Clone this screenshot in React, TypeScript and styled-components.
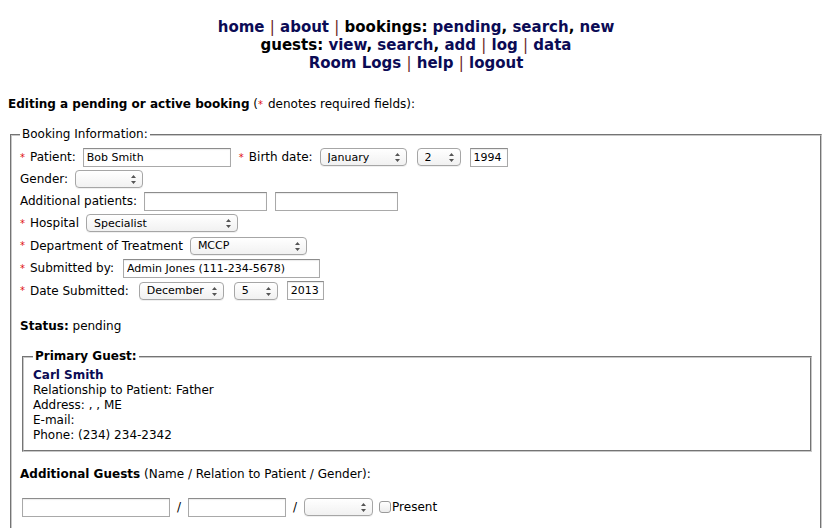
import React from 'react';
import styled, { createGlobalStyle } from 'styled-components';

const GlobalStyle = createGlobalStyle`
  body {
    margin: 8px;
    background: #fff;
    color: #000;
    font-family: "DejaVu Sans", Verdana, sans-serif;
    font-size: 12px;
  }
`;

const Nav = styled.nav`
  margin-top: 10px;
  text-align: center;
  font-weight: bold;
  font-size: 15px;
  line-height: 18px;
`;
const NavLink = styled.a`
  color: #0b0b55;
  text-decoration: none;
`;
const Sep = styled.span`
  color: #6a1f1f;
  font-weight: normal;
`;

const Heading = styled.p`
  margin: 25px 0 0;
  line-height: 15px;
`;
const Req = styled.span`
  color: #e01010;
  font-size: 10px;
  margin-right: 5px;
`;

const Fieldset = styled.fieldset<{ $inner?: boolean }>`
  margin: ${p => (p.$inner ? '15px 0 0 2px' : '15px 2px 0')};
  padding: ${p => (p.$inner ? '0 9px 7px' : '0 8px 24px')};
  border: 2px groove #c8c8c8;
  min-width: 0;
`;
const Legend = styled.legend<{ $bold?: boolean }>`
  padding: 0 2px;
  line-height: 15px;
  font-weight: ${p => (p.$bold ? 'bold' : 'normal')};
`;

const Rows = styled.div`
  padding-top: 4px;
`;
const Row = styled.div<{ $h?: number }>`
  display: flex;
  align-items: center;
  height: ${p => p.$h ?? 22}px;
`;
const Label = styled.span<{ $mr?: number }>`
  margin-right: ${p => p.$mr ?? 7}px;
  white-space: nowrap;
`;

const TextInput = styled.input<{ $w: number; $mr?: number }>`
  box-sizing: border-box;
  width: ${p => p.$w}px;
  height: 19px;
  margin: 0 ${p => p.$mr ?? 0}px 0 0;
  padding: 0 3px;
  border: 1px solid #a9a9a9;
  border-top-color: #8c8c8c;
  box-shadow: inset 0 1px 1px rgba(0, 0, 0, 0.08);
  font-family: "DejaVu Sans", Verdana, sans-serif;
  font-size: 11px;
  color: #000;
  background: #fff;
  outline: none;
`;

const SelectWrap = styled.span<{ $w: number; $mr?: number }>`
  position: relative;
  display: inline-block;
  flex: none;
  width: ${p => p.$w}px;
  height: 18px;
  margin-right: ${p => p.$mr ?? 0}px;
`;
const Select = styled.select`
  appearance: none;
  -webkit-appearance: none;
  box-sizing: border-box;
  width: 100%;
  height: 100%;
  margin: 0;
  padding: 0 14px 0 7px;
  border: 1px solid #a6a6a6;
  border-radius: 4px;
  background: linear-gradient(#ffffff, #f1f1f1);
  box-shadow: 0 1px 0 rgba(0, 0, 0, 0.06);
  font-family: "DejaVu Sans", Verdana, sans-serif;
  font-size: 11px;
  color: #000;
  outline: none;
`;
const ArrowIcon = styled.svg`
  position: absolute;
  right: 7px;
  top: 5px;
  pointer-events: none;
`;

const Arrows = () => (
  <ArrowIcon width="5" height="9" viewBox="0 0 5 9">
    <path d="M2.5 0 L5 3 L0 3 Z M2.5 9 L5 6 L0 6 Z" fill="#555" />
  </ArrowIcon>
);

const Drop: React.FC<{ w: number; mr?: number; value?: string }> = ({ w, mr, value }) => (
  <SelectWrap $w={w} $mr={mr}>
    <Select defaultValue={value ?? ''}>
      <option value={value ?? ''}>{value ?? ''}</option>
    </Select>
    <Arrows />
  </SelectWrap>
);

const Status = styled.p`
  margin: 17px 0 0;
  line-height: 15px;
`;
const GuestBody = styled.div`
  padding-top: 4px;
  line-height: 15px;
`;
const GuestName = styled.div`
  color: #0b0b55;
  font-weight: bold;
`;
const SubHead = styled.p`
  margin: 15px 0 0;
  line-height: 15px;
`;
const GuestRow = styled.div`
  display: flex;
  align-items: center;
  height: 22px;
  margin: 14px 0 0 2px;
`;
const Slash = styled.span`
  margin: 0 7px 0 7px;
`;
const Check = styled.input`
  appearance: none;
  -webkit-appearance: none;
  box-sizing: border-box;
  flex: none;
  width: 12px;
  height: 12px;
  margin: 0 1px 0 6px;
  border: 1px solid #9a9a9a;
  border-radius: 3px;
  background: linear-gradient(#fff, #ececec);
`;

export default function App() {
  return (
    <>
      <GlobalStyle />
      <Nav>
        <div>
          <NavLink href="#">home</NavLink> <Sep>|</Sep> <NavLink href="#">about</NavLink> <Sep>|</Sep>{' '}
          bookings: <NavLink href="#">pending</NavLink>, <NavLink href="#">search</NavLink>,{' '}
          <NavLink href="#">new</NavLink>
        </div>
        <div>
          guests: <NavLink href="#">view</NavLink>, <NavLink href="#">search</NavLink>,{' '}
          <NavLink href="#">add</NavLink> <Sep>|</Sep> <NavLink href="#">log</NavLink> <Sep>|</Sep>{' '}
          <NavLink href="#">data</NavLink>
        </div>
        <div>
          <NavLink href="#">Room Logs</NavLink> <Sep>|</Sep> <NavLink href="#">help</NavLink> <Sep>|</Sep>{' '}
          <NavLink href="#">logout</NavLink>
        </div>
      </Nav>

      <Heading>
        <b>Editing a pending or active booking</b> (<Req>*</Req>denotes required fields):
      </Heading>

      <Fieldset>
        <Legend>Booking Information:</Legend>
        <Rows>
          <Row>
            <Req>*</Req>
            <Label>Patient:</Label>
            <TextInput $w={148} $mr={8} defaultValue="Bob Smith" />
            <Req>*</Req>
            <Label>Birth date:</Label>
            <Drop w={87} mr={10} value="January" />
            <Drop w={44} mr={9} value="2" />
            <TextInput $w={38} defaultValue="1994" />
          </Row>
          <Row>
            <Label>Gender:</Label>
            <Drop w={68} />
          </Row>
          <Row>
            <Label>Additional patients:</Label>
            <TextInput $w={123} $mr={8} />
            <TextInput $w={123} />
          </Row>
          <Row $h={22.5}>
            <Req>*</Req>
            <Label>Hospital</Label>
            <Drop w={152} value="Specialist" />
          </Row>
          <Row $h={22.5}>
            <Req>*</Req>
            <Label>Department of Treatment</Label>
            <Drop w={117} value="MCCP" />
          </Row>
          <Row $h={22.5}>
            <Req>*</Req>
            <Label $mr={9}>Submitted by:</Label>
            <TextInput $w={197} defaultValue="Admin Jones (111-234-5678)" />
          </Row>
          <Row $h={22.5}>
            <Req>*</Req>
            <Label $mr={10}>Date Submitted:</Label>
            <Drop w={85} mr={10} value="December" />
            <Drop w={44} mr={9} value="5" />
            <TextInput $w={37} defaultValue="2013" />
          </Row>
        </Rows>

        <Status>
          <b>Status:</b> pending
        </Status>

        <Fieldset $inner>
          <Legend $bold>Primary Guest:</Legend>
          <GuestBody>
            <GuestName>Carl Smith</GuestName>
            <div>Relationship to Patient: Father</div>
            <div>Address: , , ME</div>
            <div>E-mail:</div>
            <div>Phone: (234) 234-2342</div>
          </GuestBody>
        </Fieldset>

        <SubHead>
          <b>Additional Guests</b> (Name / Relation to Patient / Gender):
        </SubHead>

        <GuestRow>
          <TextInput $w={148} />
          <Slash>/</Slash>
          <TextInput $w={98} />
          <Slash>/</Slash>
          <Drop w={69} />
          <Check type="checkbox" />
          <span>Present</span>
        </GuestRow>
      </Fieldset>
    </>
  );
}
